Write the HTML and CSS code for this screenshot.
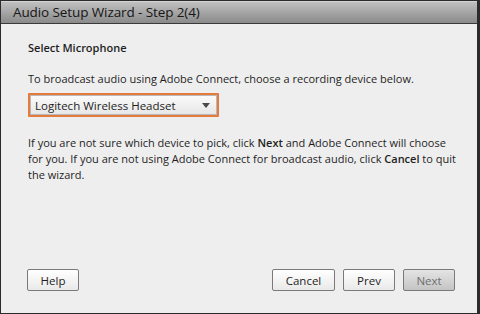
FILE: index.html
```html
<!DOCTYPE html>
<html lang="en">
<head>
    <meta charset="UTF-8">
    <title>Audio Setup Wizard</title>
    <link rel="stylesheet" href="styles.css">
</head>
<body>
    <div class="wizard">
        <div class="title-bar">Audio Setup Wizard - Step 2(4)</div>

        <div class="content">
            <div class="step-title">Select Microphone</div>

            <p class="intro">To broadcast audio using Adobe Connect, choose a recording device below.</p>

            <div class="select-box">
                <span class="select-label">Logitech Wireless Headset</span>
                <span class="select-arrow"></span>
            </div>

            <p class="hint">If you are not sure which device to pick, click <b>Next</b> and Adobe Connect will choose for you. If you are not using Adobe Connect for broadcast audio, click <b>Cancel</b> to quit the wizard.</p>
        </div>

        <div class="footer">
            <button class="btn">Help</button>
            <div class="nav-buttons">
                <button class="btn btn-cancel">Cancel</button>
                <button class="btn btn-prev">Prev</button>
                <button class="btn btn-disabled" disabled>Next</button>
            </div>
        </div>
    </div>
</body>
</html>
```

FILE: styles.css
```css
body {
    margin: 0;
    padding: 0;
    background-color: #2b2b2b;
    font-family: 'Open Sans', 'Noto Sans', sans-serif;
    color: #1e1e1e;
}

.wizard {
    width: 476px;
    height: 312px;
    border-left: 1px solid #2b2b2b;
    border-right: 3px solid #2b2b2b;
    border-top: 1px solid #2b2b2b;
    border-bottom: 1px solid #2b2b2b;
    background-color: #eeeeee;
    display: flex;
    flex-direction: column;
}

.title-bar {
    height: 21px;
    padding-left: 12px;
    border-top: 1px solid #d4d4d4;
    border-bottom: 1px solid #3a3a3a;
    background: linear-gradient(to bottom, #c0c0c0, #8a8a8a);
    font-size: 13.5px;
    line-height: 20px;
    color: #161616;
    letter-spacing: -0.1px;
}

.content {
    flex: 1;
    padding: 16px 20px 0 27px;
    font-size: 11px;
}

.step-title {
    font-weight: 600;
    font-size: 11px;
    line-height: 16px;
}

.intro {
    margin: 15px 0 6px;
    line-height: 16px;
}

.select-box {
    width: 182px;
    height: 20px;
    display: flex;
    align-items: center;
    justify-content: space-between;
    padding: 0 0 0 5px;
    border: 2px solid #e47b3c;
    border-radius: 1px;
    background: linear-gradient(to bottom, #fbfbfb, #e6e6e6);
    box-shadow: inset 0 0 0 1px #b9b9b9;
    font-size: 11.5px;
}

.select-arrow {
    width: 0;
    height: 0;
    margin-right: 7px;
    border-left: 4px solid transparent;
    border-right: 4px solid transparent;
    border-top: 5px solid #4a4a4a;
}

.hint {
    margin: 18px 0 0;
    line-height: 16px;
    width: 430px;
}

.hint b {
    font-weight: 600;
}

.footer {
    display: flex;
    justify-content: space-between;
    padding: 0 22px 22px 26px;
}

.nav-buttons {
    display: flex;
    gap: 8px;
}

.btn {
    height: 22px;
    min-width: 52px;
    padding: 0 12px;
    border: 1px solid #7a7a7a;
    border-radius: 2px;
    background: linear-gradient(to bottom, #ffffff, #e9e9e9);
    font-family: inherit;
    font-size: 11.5px;
    color: #1e1e1e;
}

.btn-cancel {
    width: 63px;
}

.btn-prev {
    width: 51px;
}

.btn-disabled {
    width: 52px;
    color: #6e6e6e;
    background: linear-gradient(to bottom, #e4e4e4, #c4c4c4);
}
```
